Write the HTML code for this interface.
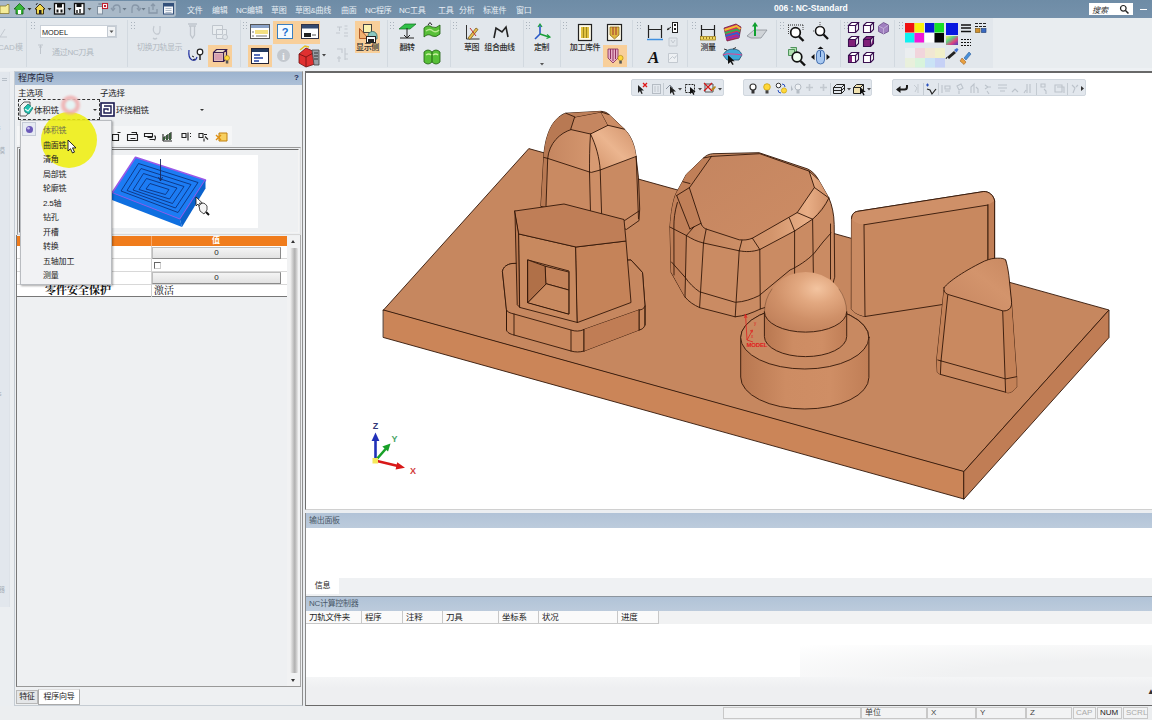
<!DOCTYPE html>
<html lang="zh">
<head>
<meta charset="utf-8">
<title>006 : NC-Standard</title>
<style>
*{box-sizing:border-box;margin:0;padding:0}
html,body{width:1152px;height:720px;overflow:hidden;background:#ebeef1;font-family:"Liberation Sans","Noto Sans CJK SC",sans-serif;font-size:8px;color:#222}
.abs{position:absolute}
#titlebar{position:absolute;left:0;top:0;width:1152px;height:18px;background:linear-gradient(#6e8ca6,#7591ab)}
#qat{position:absolute;left:0;top:1px;width:176px;height:16px;background:#a9b9c8;border-radius:0 0 3px 0}
#menu span{position:absolute;top:4px;color:#e8eff5;font-size:8px;white-space:nowrap;letter-spacing:-0.3px}
#title{position:absolute;left:774px;top:3px;color:#fff;font-weight:bold;font-size:8.5px;white-space:nowrap}
#search{position:absolute;left:1089px;top:3px;width:44px;height:12px;background:#fff}
#ribbon{position:absolute;left:0;top:18px;width:1152px;height:53px;background:#e9edf0}
#ribbon .grp{position:absolute;top:1px;height:49px;background:#e3e8ed;border-right:1px solid #d3dae1}
.hl{position:absolute;background:#f9cf97}
.rt{position:absolute;font-size:8px;color:#555;white-space:nowrap;letter-spacing:-0.3px}
#leftstrip{position:absolute;left:0;top:72px;width:10px;height:535px;background:#e2e7ed;border-right:1px solid #dde2e8}
#lpanel{position:absolute;left:14px;top:71px;width:289px;height:635px;background:#eef0f2;border:1px solid #c5ccd3;border-right-color:#8e8e8e}
#lptitle{position:absolute;left:0;top:0;width:287px;height:13px;background:linear-gradient(#9cb3ce,#adc0d7);font-size:9px;line-height:13px;padding-left:3px;color:#223}
#viewport{position:absolute;left:305px;top:71px;width:847px;height:439px;background:#fff;border-top:2px solid #686868;border-left:1px solid #6e6e6e;border-bottom:1px solid #d0d0d0}
.ptitle{position:absolute;height:12px;background:linear-gradient(#b1c3d7,#bccbdc);font-size:8px;line-height:12px;padding-left:3px;color:#4a5868;letter-spacing:-.3px}
#status{position:absolute;left:0;top:706px;width:1152px;height:14px;background:#eceef0}
.sb{position:absolute;top:707px;height:12px;border:1px solid #c8c8c8;background:#f2f3f4;font-size:8px;line-height:10px;padding-left:3px;color:#444}
.mi{position:absolute;left:23px;font-size:8px;color:#222;white-space:nowrap;letter-spacing:-0.2px}
</style>
</head>
<body>
<div id="titlebar">
  <div id="qat">
<svg class="abs" style="left:0;top:0" width="176" height="17" viewBox="0 1 176 17">
<path d="M0,6 h6 l1,-1.500 h2 v9 h-9z" fill="#f4ec98" stroke="#807020" stroke-width=".7"/>
<path d="M14,9 l5.500,-5.500 5.500,5.500 h-2 v5 h-7 v-5z" fill="#38b838" stroke="#106010" stroke-width=".8"/><rect x="18" y="10" width="3" height="4" fill="#fff"/>
<path d="M27.500,8 h4 l-2,2.500z" fill="#333"/>
<path d="M35,9 l5,-5 5,5 h-1.500 v5 h-7 v-5z" fill="#f0d850" stroke="#302000" stroke-width=".9"/><rect x="39" y="10" width="2.500" height="4" fill="#222"/><path d="M36,5 l1.500,-2" stroke="#222"/>
<path d="M47.500,8 h4 l-2,2.500z" fill="#333"/>
<rect x="54.500" y="3.500" width="10" height="10.500" fill="#fff" stroke="#111" stroke-width="1.300"/><rect x="57" y="4" width="5" height="3.500" fill="#111"/><rect x="56.500" y="9.500" width="2" height="3" fill="#111"/><rect x="60.500" y="9.500" width="2" height="3" fill="#111"/>
<path d="M67.500,8 h4 l-2,2.500z" fill="#333"/>
<rect x="74.500" y="3.500" width="9.500" height="10.500" fill="#fff" stroke="#111" stroke-width="1.300"/><rect x="76.500" y="4" width="5" height="3" fill="#111"/><path d="M77,10 v3 m3,-4 v4" stroke="#111" stroke-width="1.400"/>
<path d="M87.500,8 h4 l-2,2.500z" fill="#555"/>
<rect x="97.500" y="6.500" width="5" height="7.500" fill="#e8ecf0" stroke="#8090a0"/><path d="M100,5 v-2 m-2,1 h4" stroke="#8090a0"/><rect x="102.500" y="3.500" width="5" height="5" fill="#fff" stroke="#c02030" stroke-width="1.100"/><rect x="104" y="5" width="2" height="2" fill="#c02030"/>
<g stroke="#8797a8" fill="none" stroke-width="1.300"><path d="M113,9 q0,-4 4,-4 q3,0 3,4 v4"/><path d="M111,8 l2,2.500 2,-2.500"/><path d="M132,13 v-4 q0,-4 3,-4 q4,0 4,4"/><path d="M137,8 l2,2.500 2,-2.500"/><path d="M149,7 v6 h8 v-4 m-6,-3 l2,-2 2,2 m-2,-2 v6"/></g>
<path d="M122.500,8 h4 l-2,2.500z" fill="#6a7a8a"/><path d="M141.500,8 h4 l-2,2.500z" fill="#6a7a8a"/>
<rect x="163.500" y="3.500" width="10" height="10.500" fill="#f4f6fa" stroke="#33507a"/><rect x="164" y="4" width="9" height="2.500" fill="#33507a"/><path d="M165.500,8.500 h6 m-6,2 h6 m-6,2 h6" stroke="#9ab" stroke-width=".8"/>
</svg>

</div>
  <div id="menu">
    <span style="left:187px">文件</span><span style="left:212px">编辑</span><span style="left:236px">NC编辑</span><span style="left:271px">草图</span><span style="left:295px">草图&amp;曲线</span><span style="left:341px">曲面</span><span style="left:365px">NC程序</span><span style="left:399px">NC工具</span><span style="left:438px">工具</span><span style="left:459px">分析</span><span style="left:483px">标准件</span><span style="left:516px">窗口</span>
  </div>
  <div id="title">006 : NC-Standard</div>
  <div id="search"><span class="abs" style="left:3px;top:1px;font-size:8px;color:#333;font-style:italic">搜索</span><svg class="abs" style="left:30px;top:1px" width="11" height="11" viewBox="0 0 11 11"><circle cx="4.300" cy="4.300" r="2.800" fill="none" stroke="#222" stroke-width="1.200"/><path d="M6.500,6.500 l3,3" stroke="#222" stroke-width="1.500"/></svg></div>
  <div class="abs" style="left:1140px;top:9px;width:7px;height:1px;background:#fff"></div>
</div>
<div id="ribbon">
<svg class="abs" style="left:0;top:0" width="1152" height="53" viewBox="0 18 1152 53" font-family="Liberation Sans, Noto Sans CJK SC, sans-serif">
<rect x="0" y="18" width="993" height="51" fill="#e2e7ec"/>
<rect x="0" y="68" width="1152" height="3" fill="#eef1f4"/>
<!-- separators -->
<g stroke="#d2d9e0" stroke-width="1">
<path d="M26.500,20 v47 M127.500,20 v47 M240.500,20 v47 M387.500,20 v47 M450.500,20 v47 M523.500,20 v47 M560.500,20 v47 M632.500,20 v47 M687.500,20 v47 M776.500,20 v47 M840.500,20 v47 M894.500,20 v47"/>
</g>
<!-- grips -->
<g fill="#aab3bd">
<g id="grip"><rect x="0" y="0" width="1" height="1"/><rect x="3" y="0" width="1" height="1"/><rect x="0" y="3" width="1" height="1"/><rect x="3" y="3" width="1" height="1"/><rect x="0" y="6" width="1" height="1"/><rect x="3" y="6" width="1" height="1"/></g>
</g>
<g fill="#aab3bd">
<use href="#grip" x="31" y="22"/><use href="#grip" x="131" y="22"/><use href="#grip" x="243" y="22"/><use href="#grip" x="390" y="22"/><use href="#grip" x="453" y="22"/><use href="#grip" x="526" y="22"/><use href="#grip" x="563" y="22"/><use href="#grip" x="637" y="22"/><use href="#grip" x="692" y="22"/><use href="#grip" x="780" y="22"/><use href="#grip" x="844" y="22"/><use href="#grip" x="899" y="22"/>
</g>
<!-- group 1 partial -->
<path d="M0,37 l5,-8 m-5,8 h7" stroke="#c3c9d0" fill="none"/>
<text x="-2" y="50" font-size="8" fill="#b4bbc3">CAD模</text>
<!-- group 2 -->
<rect x="40.500" y="25.500" width="76" height="12" fill="#fff" stroke="#c9d0d8"/>
<rect x="107.500" y="26.500" width="8" height="10" fill="#f1f3f5" stroke="#c3cad2"/>
<path d="M109.500,30.500 h4 l-2,2.500z" fill="#555"/>
<text x="42" y="34.500" font-size="7.300" fill="#222">MODEL</text>
<path d="M38,45 h5 m-2.500,0 v9 m-1.500,-7 h3" stroke="#bfc5cc" fill="none"/>
<text x="52" y="55" font-size="8" fill="#b0b7bf" letter-spacing="-.3">通过NC刀具</text>
<!-- group 3 -->
<path d="M154,26 q-2,6 2,8 q4,1 4,-4 v-4 m-3,12 q-2,2 -4,0" stroke="#c3c9d0" fill="none" stroke-width="1.200"/>
<text x="137" y="50" font-size="8" fill="#b0b7bf" letter-spacing="-.5">切换刀轨显示</text>
<path d="M188,24 h9 m-8,2 h7 m-5.500,0 v9 l2,3 2,-3 v-9" stroke="#c0c6cd" fill="none" stroke-width="1.300"/>
<path d="M212.500,25.500 h10 v9 h-10z M216.500,29.500 h10 v9 h-10z" stroke="#c0c6cd" fill="#e9edf0"/><circle cx="225" cy="37" r="2.500" fill="#e2e7ec" stroke="#c0c6cd"/>
<path d="M189,50 q-1,8 3,10 q4,1 5,-3" stroke="#2030a0" fill="none" stroke-width="1.200"/><circle cx="200" cy="52" r="2.800" fill="#fff" stroke="#222" stroke-width="1.200"/><path d="M200,55 v5" stroke="#222" stroke-width="1.500"/><path d="M192,56 l2,1 m-1,3 l2,-1" stroke="#222"/>
<rect x="208" y="45" width="24" height="22" fill="#f8cf9a"/>
<path d="M213.500,52.500 h10 v9 h-10z M213.500,52.500 l3,-3 h10 l-3,3 M226.500,49.500 v9 l-3,3" fill="#e8d8c8" stroke="#3a2050" stroke-width="1.200"/><rect x="214.500" y="53.500" width="8" height="7" fill="#d8a0b0"/><circle cx="227" cy="58" r="2.500" fill="#ffd83a" stroke="#a08010" stroke-width=".6"/><rect x="225.800" y="60.500" width="2.500" height="3" fill="#555"/>
<!-- group 4 -->
<rect x="250.500" y="24.500" width="19" height="14" fill="#fff" stroke="#555"/><rect x="251" y="25" width="18" height="3" fill="#8aa2c8"/><rect x="255" y="30" width="13" height="4" fill="#f4e080"/><path d="M252,32 h2 m-2,4 h2 m2,0 h11" stroke="#777"/>
<rect x="273" y="21" width="47" height="23" fill="#f8cf9a"/>
<rect x="277.500" y="24.500" width="15" height="14" fill="#f4fbff" stroke="#3a7fc0"/><text x="285" y="36" font-size="11" font-weight="bold" fill="#1a6fd0" text-anchor="middle">?</text>
<rect x="301.500" y="24.500" width="17" height="14" fill="#fff" stroke="#334"/><rect x="302" y="25" width="16" height="3.500" fill="#334a70"/><rect x="304" y="33" width="7" height="4" fill="#222"/><path d="M312,35 h4" stroke="#555"/>
<rect x="248" y="45" width="24" height="22" fill="#f8cf9a"/>
<rect x="251.500" y="48.500" width="17" height="15" fill="#fff" stroke="#223"/><rect x="252" y="49" width="16" height="3" fill="#223a60"/><path d="M254,55 h6 m-6,3 h9 m-9,3 h5" stroke="#2040a0" stroke-width="1.300"/>
<circle cx="283.500" cy="55.500" r="6.500" fill="#c3c8ce"/><text x="283.500" y="59.500" font-size="10" font-weight="bold" fill="#f4f6f8" text-anchor="middle" font-family="Liberation Serif, serif">i</text>
<path d="M299,54 l7,-6 9,4 v12 l-9,3 -7,-4z" fill="#e03030" stroke="#701010" stroke-width=".8"/><path d="M299,54 l7,3 9,-5 m-9,5 v10" stroke="#701010" fill="none" stroke-width=".8"/><path d="M312,50 h7 v15 h-5z" fill="#9aa0a8" stroke="#444" stroke-width=".8"/><path d="M314,53 h4 m-4,3 h4 m-4,3 h4" stroke="#333"/><path d="M300,50 l5,-4 4,1" stroke="#e8c020" fill="none" stroke-width="1.500"/>
<path d="M322,54 h4 l-2,2.500z" fill="#444"/>
<g stroke="#c3c9d0" fill="none" stroke-width="1.100"><path d="M337,27 h5 m-2.500,0 v4 m5,-5 h3 m-3,3 h3 M336,33 h4 m4,0 h4 m-4,3 h4"/><path d="M337,49 h5 v4 m3,-5 v12 m-8,-2 h4 m-2,-2 v6 m6,-8 h3 m-3,5 h3"/></g>
<rect x="355" y="21" width="25" height="32" fill="#f8cf9a"/>
<rect x="363.500" y="24.500" width="8" height="8" fill="#fbf3b0" stroke="#444"/><path d="M359.500,28.500 l9,10 h-9z" fill="#f0b070" stroke="#a04010" stroke-width=".8"/><path d="M368,36 a4.500,4.500 0 0 1 9,0 v3 h-9z" fill="#8ac8c0" stroke="#306860" stroke-width=".8"/><rect x="366.500" y="36.500" width="9" height="6" fill="#fff" stroke="#222"/><rect x="368" y="39" width="6" height="3" fill="#222"/>
<text x="367.500" y="50" font-size="8" fill="#2e2e2e" font-weight="500" text-anchor="middle" letter-spacing="-.4">显示侧</text>
<!-- group 5 green -->
<path d="M399,29 l6,-5 h11 l-6,5z" fill="#30c048" stroke="#107020" stroke-width=".7"/><path d="M407,28 v10 m-3,-3 l3,3 3,-3 M400,38 h14" stroke="#222" fill="none"/>
<text x="407" y="50" font-size="8" fill="#2e2e2e" font-weight="500" text-anchor="middle" letter-spacing="-.4">翻转</text>
<path d="M424,28 q4,-4 8,-1 q4,2 8,-2 v9 q-4,4 -8,2 q-4,-3 -8,1z" fill="#58c038" stroke="#206010" stroke-width=".8"/><path d="M428,25 l2,-2.500 2,2.500" fill="none" stroke="#222"/><path d="M426,31 q4,-3 7,0 q3,2 6,-1" stroke="#b8e890" fill="none" stroke-width="1.500"/>
<path d="M424,52 q4,-4 8,0 q4,-4 8,0 v10 q-4,4 -8,0 q-4,4 -8,0z" fill="#58c038" stroke="#206010" stroke-width=".8"/><path d="M432,52 v10" stroke="#206010"/><path d="M426,55 q3,-2 5,0 m2,0 q3,-2 5,0" stroke="#c8f0a0" fill="none" stroke-width="1.500"/>
<!-- group 6 sketch -->
<path d="M466.500,25 v14 h13" stroke="#333" fill="none"/><path d="M468,38 l8,-10 2,1.500 -8,10z" fill="#e8c050" stroke="#705010" stroke-width=".7"/><path d="M470,28 l6,8" stroke="#c03030"/>
<text x="471.500" y="50" font-size="8" fill="#2e2e2e" font-weight="500" text-anchor="middle" letter-spacing="-.4">草图</text>
<path d="M494,38 l2,-10 6,4 4,-5 2,10" stroke="#222" fill="none" stroke-width="1.600"/>
<text x="499.500" y="50" font-size="8" fill="#2e2e2e" font-weight="500" text-anchor="middle" letter-spacing="-.4">组合曲线</text>
<!-- group 7 -->
<path d="M540,25 v9" stroke="#2858c8" stroke-width="1.600"/><path d="M540,34 l-5,5" stroke="#2858c8" stroke-width="1.600"/><path d="M540,34 l9,3" stroke="#18a038" stroke-width="1.600"/><path d="M538,27 l2,-3 2,3 M547,34.500 l3,2.500 -3.500,1.500" fill="none" stroke="#18a038" stroke-width="1.200"/>
<text x="541.500" y="50" font-size="8" fill="#2e2e2e" font-weight="500" text-anchor="middle" letter-spacing="-.4">定制</text>
<path d="M540,63 h4 l-2,2.500z" fill="#555"/>
<!-- group 8 -->
<rect x="578.500" y="24.500" width="13" height="16" fill="#fffbe8" stroke="#222" stroke-width="1.200"/><rect x="581" y="27" width="8" height="11" fill="#e0c040"/><path d="M583.500,27 v11 m3,-11 v11" stroke="#a08818"/>
<text x="585" y="50" font-size="8" fill="#2e2e2e" font-weight="500" text-anchor="middle" letter-spacing="-.4">加工库件</text>
<rect x="607.500" y="24.500" width="14" height="16" fill="#fffbe8" stroke="#222" stroke-width="1.200"/><path d="M610,27 h9 v8 l-4.500,4 -4.500,-4z" fill="#e0b840" stroke="#806010" stroke-width=".7"/><path d="M613,27 v8 m3,-8 v8" stroke="#a03030"/>
<rect x="603" y="45" width="24" height="22" fill="#f8cf9a"/>
<path d="M608,49 h10 v9 l-5,5 -5,-5z" fill="#e8b0c8" stroke="#802858" stroke-width=".8"/><path d="M610.500,49 v10 m2.500,-10 v12 m2.500,-12 v10" stroke="#903060"/><circle cx="620.500" cy="58" r="2.600" fill="#ffd83a" stroke="#a08010" stroke-width=".6"/><rect x="619.300" y="60.600" width="2.500" height="3" fill="#555"/>
<!-- group 9 dims -->
<path d="M648.500,25 v13 m13,-13 v13 M648.500,29.500 h13" stroke="#222" fill="none" stroke-width="1.200"/><path d="M647,39.500 h16" stroke="#4090e0" stroke-width="1.500"/>
<rect x="672.500" y="22.500" width="5" height="10" fill="#fff" stroke="#222"/><rect x="674" y="24" width="2" height="2" fill="#222"/><rect x="674" y="28" width="2" height="2" fill="#222"/><path d="M667,30 l4,-3" stroke="#222"/><path d="M667,30 l1,-2.500 1.500,2z" fill="#222"/>
<path d="M669,38 h8 v8 h-8z m2,2 l2,3 2,-3" stroke="#c3c9d0" fill="none"/>
<text x="648" y="62.500" font-size="17" font-weight="bold" font-style="italic" fill="#111" font-family="Liberation Serif, serif">A</text>
<path d="M668.500,53.500 h9 v9 h-9z m1,6 l3,-3 2,2 2,-3" stroke="#c3c9d0" fill="#eef1f4"/>
<!-- group 10 measure -->
<path d="M701.500,25 v11 m13,-11 v11 M701.500,29.500 h13" stroke="#222" fill="none" stroke-width="1.200"/><rect x="700.500" y="36.500" width="15" height="3.500" fill="#f0d860" stroke="#907010" stroke-width=".7"/><path d="M703.500,37 v2 m3,-2 v2 m3,-2 v2 m3,-2 v2" stroke="#705008" stroke-width=".7"/>
<text x="708" y="50" font-size="8" fill="#2e2e2e" font-weight="500" text-anchor="middle" letter-spacing="-.4">测量</text>
<path d="M724,28 l12,-4 5,3 -2,11 -12,3z" fill="#d03060" stroke="#601030" stroke-width=".7"/><path d="M724.500,30 l12,-4 4,3" stroke="#f0c030" stroke-width="2" fill="none"/><path d="M725,33 l12,-3.500 3,2" stroke="#30b050" stroke-width="2" fill="none"/><path d="M725.500,36 l11.500,-3 2.500,2" stroke="#3060d0" stroke-width="2" fill="none"/><path d="M726,39 l11,-3 2,1.500" stroke="#9030b0" stroke-width="2" fill="none"/>
<path d="M747,36 l7,-6 h13 l-6,8 h-10z" fill="#d0d4d8" stroke="#8a9098" stroke-width=".8"/><path d="M755,36 v-11" stroke="#10a030" stroke-width="2"/><path d="M752,26.500 l3,-4.500 3,4.500z" fill="#10a030"/>
<path d="M723,55 q3,-6 10,-6 q7,0 9,6 l-3,5 h-12z" fill="#40a8d8" stroke="#205070" stroke-width=".8"/><path d="M727,50 l-3,-1 m9,0 l3,-1.500" stroke="#333"/><path d="M728,55 v9 l2.500,-2 2,3 1.200,-.8 -2,-3 3,0z" fill="#111"/><path d="M723,55 q4,-2 9,-1 q5,0 10,1" stroke="#e84090" fill="none"/>
<!-- group 11 zoom -->
<path d="M788,25 h15" stroke="#222" stroke-dasharray="1 1"/><path d="M788.500,25 v10 m14.500,-10 v6" stroke="#444" stroke-dasharray="1 1"/><circle cx="795.500" cy="32.500" r="4.800" fill="#fff" stroke="#111" stroke-width="1.700"/><path d="M799,36.500 l4.500,4.500" stroke="#111" stroke-width="2.400"/>
<circle cx="820" cy="31" r="4.500" fill="#fff" stroke="#111" stroke-width="1.600"/><path d="M823.500,34.500 l4.500,4.500" stroke="#111" stroke-width="2.300"/><path d="M820,22 v5 m-6,4 h-2" stroke="#555" stroke-dasharray="1 1"/>
<path d="M788.500,49.500 h6 v6 h-6z m2,-2 h6 v6" fill="#b0e0b0" stroke="#308040" stroke-width=".8"/><circle cx="797" cy="57" r="4.800" fill="#f0fff0" stroke="#111" stroke-width="1.700"/><path d="M800.500,61 l4.500,4.500" stroke="#111" stroke-width="2.400"/>
<rect x="816.500" y="50" width="8" height="14" rx="4" fill="#a8c8f0" stroke="#2858a0" stroke-width=".8"/><path d="M820.500,51 v6" stroke="#2858a0"/><path d="M811,57 l3.500,-3 v6z M830,57 l-3.500,-3 v6z M820.500,46.500 l-3,2.500 h6z" fill="#111"/>
<!-- group 12 cubes -->
<g id="cubeo"><path d="M848.500,25.500 h7 v7 h-7z M848.500,25.500 l3,-3 h7 l-3,3 M858.500,22.500 v7 l-3,3" fill="#fff" stroke="#3a1050" stroke-width="1.100"/></g>
<use href="#cubeo" x="15" y="0"/>
<path d="M878.500,26 l5,-3.500 5,2.500 v6.500 l-5,2.500 -5,-2.500z" fill="#a080c0" stroke="#604080" stroke-width=".7"/><path d="M878.500,26 l5,2.500 5,-3.500 m-5,3.500 v6" stroke="#d0c0e0" fill="none" stroke-width=".7"/>
<path d="M848.500,39.500 h7 v7 h-7z M848.500,39.500 l3,-3 h7 l-3,3 M858.500,36.500 v7 l-3,3" fill="#fff" stroke="#3a1050" stroke-width="1.100"/><rect x="849" y="40" width="6" height="6" fill="#802078"/>
<path d="M863.500,39.500 h7 v7 h-7z M863.500,39.500 l3,-3 h7 l-3,3 M873.500,36.500 v7 l-3,3" fill="#802078" stroke="#3a1050" stroke-width="1.100"/>
<use href="#cubeo" x="0" y="30"/><path d="M849,56 h3 v6 h-3z" fill="#802078"/>
<use href="#cubeo" x="15" y="30"/>
<!-- colors -->
<rect x="905" y="23" width="9.500" height="9.500" fill="#f01010"/><rect x="914.500" y="23" width="9.500" height="9.500" fill="#f8f010"/><rect x="925" y="23" width="9.500" height="9.500" fill="#0818d8"/><rect x="934.500" y="23" width="9.500" height="9.500" fill="#18e028"/>
<rect x="946" y="23" width="12" height="12" fill="#0818e0"/>
<rect x="905" y="33" width="9.500" height="9.500" fill="#10f0f0"/><rect x="914.500" y="33" width="9.500" height="9.500" fill="#f018d8"/><rect x="925" y="33" width="9.500" height="9.500" fill="#fff"/><rect x="934.500" y="33" width="9.500" height="9.500" fill="#080808"/>
<rect x="946" y="36" width="12" height="9" fill="url(#rg1)"/>
<path d="M961,25 h10 m-10,3 h10 m-10,3.500 h10" stroke="#111" stroke-width="1.500"/>
<path d="M975,23.500 h11 m-11,3 h11" stroke="#222" stroke-dasharray="3 1"/><rect x="975.500" y="28.500" width="4.500" height="4" fill="#d09030" stroke="#705010" stroke-width=".6"/><rect x="981.500" y="28.500" width="4.500" height="4" fill="#3868c0" stroke="#183870" stroke-width=".6"/>
<path d="M961,39.500 h10 m-10,3 h10 m-10,3 h10" stroke="#111" stroke-dasharray="2 1" stroke-width="1.200"/>
<g opacity=".55"><rect x="905" y="48" width="10" height="10" fill="#f4f4f4"/><rect x="915" y="48" width="10" height="10" fill="#ffc8d0"/><rect x="925" y="48" width="10" height="10" fill="#ffe8c0"/><rect x="935" y="48" width="10" height="10" fill="#fff8b0"/>
<rect x="905" y="58" width="10" height="9.500" fill="#f0f8d0"/><rect x="915" y="58" width="10" height="9.500" fill="#d0ffd0"/><rect x="925" y="58" width="10" height="9.500" fill="#b8e0ff"/><rect x="935" y="58" width="10" height="9.500" fill="#b0c0ff"/></g>
<path d="M947,57 l7,-6 2,2 -7,6z" fill="#222"/><path d="M954,50 l3,-2 1.500,1.500 -2,3z" fill="#4070d0"/><path d="M947,57 l-1,2" stroke="#222"/>
<path d="M969,52 l2,2 -5,6 -2,-2z" fill="#4890d8" stroke="#205090" stroke-width=".5"/><path d="M962,58 l4,4 -2,2.500 -4,-3.500z" fill="#e8a040" stroke="#905010" stroke-width=".5"/>
<defs><linearGradient id="rg1" x1="0" y1="0" x2="1" y2="1"><stop offset="0" stop-color="#f0f060"/><stop offset=".35" stop-color="#60d080"/><stop offset=".65" stop-color="#e04080"/><stop offset="1" stop-color="#4040c0"/></linearGradient></defs>
</svg>

</div>
<div id="status"></div>
<div id="leftstrip"><span class="abs" style="left:2px;top:6px;width:5px;height:1px;background:#b8c0c9;box-shadow:0 2px 0 #b8c0c9"></span><span class="abs" style="left:-3px;top:52px;font-size:7px;color:#a9b1ba">s</span><span class="abs" style="left:-2px;top:73px;font-size:7px;color:#a9b1ba">模</span><span class="abs" style="left:-2px;top:318px;font-size:7px;color:#a9b1ba">s</span><span class="abs" style="left:-2px;top:512px;font-size:7px;color:#a9b1ba">器</span></div>
<div id="lpanel"><div id="lptitle">程序向导</div></div>
<style>
.pl{position:absolute;font-size:8.5px;color:#222;white-space:nowrap;letter-spacing:-.3px;line-height:10px}
.gbtn{position:absolute;left:152px;width:129px;height:12px;background:linear-gradient(#f4f4f4,#e2e2e2);border:1px solid #bdbdbd;border-right-color:#8a8a8a;border-bottom-color:#8a8a8a;font-size:8px;line-height:10px;text-align:center;color:#222}
</style>
<div class="abs" style="left:294px;top:73px;font-size:8px;font-weight:bold;color:#1c2c55">?</div>
<div class="pl" style="left:18px;top:88px">主选项</div>
<div class="pl" style="left:100px;top:88px">子选择</div>
<!-- main combo -->
<div class="abs" style="left:18px;top:99px;width:82px;height:21px;border:1px dashed #333"></div>
<svg class="abs" style="left:18px;top:100px" width="16" height="19" viewBox="18 100 16 19"><path d="M20,106 l4,-4 h6 v9 l-4,5 h-6z" fill="#f4f4f4" stroke="#333" stroke-width=".8"/><path d="M24,108 l4,-4 5,4 -4,6 -4,-2z" fill="#20c0b0" stroke="#106860" stroke-width=".7"/><path d="M25,109 l3,2 4,-5" stroke="#e8fff8" fill="none" stroke-width="1.200"/></svg>
<div class="pl" style="left:34px;top:105px">体积铣</div>
<div class="abs" style="left:93px;top:109px;width:0;height:0;border-left:2px solid transparent;border-right:2px solid transparent;border-top:2.500px solid #333"></div>
<!-- sub combo -->
<svg class="abs" style="left:100px;top:102px" width="15" height="15" viewBox="0 0 15 15"><rect x="1" y="1" width="13" height="13" fill="#fff" stroke="#1a1a50" stroke-width="1.600"/><path d="M4,4 h7 v7 h-7 v-4 h4 v1.500" fill="none" stroke="#1a1a50" stroke-width="1.400"/></svg>
<div class="pl" style="left:116px;top:105px">环绕粗铣</div>
<div class="abs" style="left:200px;top:109px;width:0;height:0;border-left:2px solid transparent;border-right:2px solid transparent;border-top:2.500px solid #333"></div>
<!-- icon row -->
<div class="abs" style="left:17px;top:126px;width:215px;height:19px;background:#f5f6f7"></div>
<svg class="abs" style="left:108px;top:130px" width="124" height="14" viewBox="108 130 124 14">
<g stroke="#222" fill="none" stroke-width="1.100">
<path d="M112.500,134.500 h6 v6 h-6z m5,-2 h3"/>
<path d="M127.500,134.500 h10 v6 h-10z m4,-2 h5 v2 m-6,4 h5"/>
<path d="M144.500,133.500 h8 v3 h-8z m3,4 h5 m-3,2 h5 m0,-4 q2,2 0,5"/>
<path d="M163,141 v-7 m0,7 h9 m-7,-2 v-3 m3,3 v-5 m3,5 v-7"/>
<path d="M182,133.500 h4 v4 h-4z m6,-1 v8 m2,-7 h1 m-1,3 h1"/>
<path d="M199,133.500 h4 v4 h-4z m5,1 h3 m-2,2 l3,3 m-4,-1 v3"/>
</g>
<path d="M163,137 h2 v3 h-2z M166,135 h2 v5 h-2z M169,133 h2 v7 h-2z" fill="#3a5a3a"/>
<path d="M219,133 h8 v8 h-8z" fill="#f8d060" stroke="#c08010"/><path d="M216,135 l5,5 m0,-5 l-5,5" stroke="#e09010" stroke-width="1.400"/>
</svg>
<!-- picture frame -->
<div class="abs" style="left:17px;top:147px;width:284px;height:88px;border:1px solid #9a9a9a;border-right-color:#d8d8d8;border-bottom-color:#d8d8d8;background:#eef0f2"></div>
<div class="abs" style="left:19px;top:149px;width:280px;height:84px;border:1px solid #6e6e6e;border-right-color:#f4f4f4;border-bottom-color:#f4f4f4"></div>
<div class="abs" style="left:105px;top:155px;width:153px;height:73px;background:#fff"></div>
<svg class="abs" style="left:100px;top:150px" width="160" height="82" viewBox="100 150 160 82">
<polygon points="112,193 135.500,157.300 205.500,180 180,219.500" fill="#1c7cf4" stroke="#9a58e8" stroke-width="1.600" stroke-linejoin="round"/>
<polygon points="112,193 180,219.500 182,227 112,200" fill="#0f6fe0"/>
<polygon points="180,219.500 205.500,180 205.500,188.500 182,227" fill="#0a62cc"/>
<g fill="none" stroke="#0a2a70" stroke-width=".8">
<polygon points="121,191 138.500,163.500 198,182.500 178,212.500"/>
<polygon points="127,190.500 141,168.500 191,184.500 175.500,208"/>
<polygon points="133,190 143.500,173.500 184,186.500 172.500,203.500"/>
<polygon points="139,189.500 146.500,178.500 177,188 169.500,199"/>
<polygon points="146,189 150,183.500 169,189.500 165.500,194.500"/>
</g>
<path d="M160.500,159 v22 m-2,-4 l2,4 2,-4" stroke="#1a2a60" fill="none" stroke-width=".9"/>
<path d="M196,197 l0,9 2,-2 2,4 1.500,-.8 -2,-4 3,0z" fill="#fff" stroke="#111" stroke-width=".8"/>
<path d="M199,206 q4,-6 8,0 v4 l-3,4 -4,-3z" fill="#f4f4f4" stroke="#222" stroke-width=".8"/><path d="M206,212 l3,3" stroke="#111" stroke-width="2"/>
</svg>
<!-- table -->
<div class="abs" style="left:17px;top:236px;width:270px;height:10px;background:#f07c1c"></div>
<div class="abs" style="left:151px;top:236px;width:1px;height:10px;background:#f8a868"></div>
<div class="abs" style="left:212px;top:236px;font-size:8px;line-height:10px;color:#fff;font-weight:bold">值</div>
<div class="abs" style="left:17px;top:246px;width:270px;height:51px;background:#fff;border-bottom:1px solid #777"></div>
<div class="abs" style="left:17px;top:258px;width:270px;height:1px;background:#d8d8d8"></div>
<div class="abs" style="left:17px;top:271px;width:270px;height:1px;background:#d8d8d8"></div>
<div class="abs" style="left:17px;top:284px;width:270px;height:1px;background:#d8d8d8"></div>
<div class="abs" style="left:151px;top:246px;width:1px;height:51px;background:#d0d0d0"></div>
<div class="gbtn" style="top:247px">0</div>
<div class="abs" style="left:154px;top:262px;width:7px;height:7px;background:#fff;border:1px solid #666;border-right-color:#ccc;border-bottom-color:#ccc"></div>
<div class="gbtn" style="top:272px">0</div>
<div class="abs" style="left:45px;top:284px;font-family:'Liberation Serif','Noto Serif CJK SC',serif;font-weight:bold;font-size:11px;line-height:13px;color:#111;letter-spacing:0px;white-space:nowrap">零件安全保护</div>
<div class="abs" style="left:154px;top:284px;font-family:'Liberation Serif','Noto Serif CJK SC',serif;font-size:10px;line-height:13px;color:#111;white-space:nowrap">激活</div>
<!-- scrollbar -->
<div class="abs" style="left:287px;top:236px;width:13px;height:451px;background:#f1f2f3"></div>
<div class="abs" style="left:290px;top:248px;width:8px;height:425px;background:linear-gradient(90deg,#f4f4f4,#c4c4c4 40%,#b0b0b0 60%,#e8e8e8);border-radius:1px"></div>
<div class="abs" style="left:291px;top:240px;width:0;height:0;border-left:2.500px solid transparent;border-right:2.500px solid transparent;border-bottom:3px solid #333"></div>
<div class="abs" style="left:291px;top:679px;width:0;height:0;border-left:2.500px solid transparent;border-right:2.500px solid transparent;border-top:3px solid #333"></div>
<!-- inner frame -->
<div class="abs" style="left:16px;top:235px;width:285px;height:452px;border-left:1px solid #777;border-bottom:1px solid #999;border-right:1px solid #aaa;pointer-events:none"></div>
<!-- tabs -->
<div class="abs" style="left:16px;top:690px;width:22px;height:14px;background:#e4e6e8;border:1px solid #b8b8b8;font-size:8px;line-height:12px;text-align:center;color:#222;letter-spacing:-.3px">特征</div>
<div class="abs" style="left:38px;top:689px;width:42px;height:16px;background:#fff;border:1px solid #aaa;border-top-color:#ddd;font-size:8px;line-height:14px;text-align:center;color:#222;letter-spacing:-.3px">程序向导</div>

<div id="viewport"></div>
<svg id="model" class="abs" style="left:0;top:0" width="1152" height="720" viewBox="0 0 1152 720">
<defs>
<linearGradient id="gT1" x1="0" y1="0" x2="1" y2="0"><stop offset="0" stop-color="#b97a55"/><stop offset=".45" stop-color="#cf9068"/><stop offset=".8" stop-color="#e3a57c"/><stop offset="1" stop-color="#c98a62"/></linearGradient>
<radialGradient id="gSph" cx="0.64" cy="0.28" r="0.8"><stop offset="0" stop-color="#f3c4a0"/><stop offset=".3" stop-color="#e2a880"/><stop offset=".65" stop-color="#cf9068"/><stop offset="1" stop-color="#c0805a"/></radialGradient>
<linearGradient id="gCyl" x1="0" y1="0" x2="1" y2="0"><stop offset="0" stop-color="#b87750"/><stop offset=".35" stop-color="#cd8c63"/><stop offset=".7" stop-color="#cf8e65"/><stop offset="1" stop-color="#c07e56"/></linearGradient>
<linearGradient id="gOct" x1="0" y1="0" x2="1" y2="1"><stop offset="0" stop-color="#c48560"/><stop offset="1" stop-color="#cd8c64"/></linearGradient>
<linearGradient id="gFil" x1="0" y1="0" x2="1" y2="0"><stop offset="0" stop-color="#c2835c"/><stop offset=".6" stop-color="#d3956c"/><stop offset=".85" stop-color="#e8ae86"/><stop offset="1" stop-color="#d09068"/></linearGradient>
<linearGradient id="gWed" x1="0" y1="1" x2="1" y2="0"><stop offset="0" stop-color="#c68660"/><stop offset=".6" stop-color="#d3946c"/><stop offset="1" stop-color="#c98961"/></linearGradient>
<linearGradient id="gT1a" x1="0" y1="0" x2="1" y2="0"><stop offset="0" stop-color="#c58660"/><stop offset="1" stop-color="#d4966e"/></linearGradient>
<linearGradient id="gT1b" x1="0" y1="1" x2="1" y2="0"><stop offset="0" stop-color="#d29269"/><stop offset=".5" stop-color="#ebb58f"/><stop offset="1" stop-color="#d0916a"/></linearGradient>
</defs>
<g stroke="#321608" stroke-width="0.9" stroke-linejoin="round" stroke-linecap="round" fill="#c6875f">
<!-- plate -->
<polygon points="383.5,310 528.8,148.6 1109,310 964,471.5" fill="#c6875f"/>
<polygon points="383.5,310 964,471.5 964,499 383.5,337.5" fill="#cb8558"/>
<polygon points="964,471.5 1109,310 1109,337.5 964,499" fill="#c07d55"/>
</g>

<!-- tower1 (rounded top box) -->
<g stroke="#321608" stroke-width="0.9" stroke-linejoin="round" stroke-linecap="round" fill="none">
<path d="M540.9,206 L543.8,156.4 C544.5,142 549,125 558.4,117.5 C562,114.5 564,113.5 566,113.2 L601,111.3 C605,111.6 607,112.8 609,114.6 L624.5,129.2 C630,135 634.5,143 636,156.4 L638.5,177.8 L639.7,209 L639,220.6 L626.5,229.4 L601.6,222 L590.5,219 Z" fill="#c98a62"/>
<!-- left dark fillet -->
<path d="M540.9,206 L543.8,156.4 C544.5,142 549,125 558.4,117.5 L566,113.2 L575,117 L571,129.6 C560,133 549,143 547.7,158.4 L546,206 Z" fill="#b87953" stroke="none"/>
<!-- front-left fillet -->
<path d="M571,129.600 L590.500,134 C589.500,148 589.500,160 589.500,172 L547.700,158.400 C549,143 560,133 571,129.600 Z" fill="url(#gT1a)" stroke="none"/>
<!-- corner fillet strip -->
<path d="M590.500,134 C596,145 599.500,158 600.200,170 L591.400,172.400 L589.500,172 C589.500,160 589.500,148 590.500,134 Z" fill="#d89a72" stroke="none"/>
<!-- right fillet highlight -->
<path d="M590.500,134 L608,125.300 L624.500,129.200 C630,135 634.500,143 636.200,156.400 L600.200,170 C599.500,158 596,145 590.500,134 Z" fill="url(#gT1b)" stroke="none"/>
<!-- narrow vertical strip -->
<polygon points="589.500,172 591.400,172.400 600.200,170 601.600,222 590.500,219" fill="#cd8e66" stroke="none"/>
<!-- top small face -->
<polygon points="575,117 601,112 608,125.3 590.5,134 571,129.6" fill="#c58660"/>
<polygon points="566,113.200 601,111.300 601,112 575,117" fill="#bd7f59" stroke="none"/>
<polygon points="601,112 609,114.600 624.500,129.200 608,125.300" fill="#cc8d65" stroke="none"/>
<line x1="566" y1="113.2" x2="575" y2="117"/>
<line x1="608" y1="125.3" x2="624.5" y2="129.2"/>
<line x1="601" y1="112" x2="609" y2="114.6"/>
<path d="M571,129.6 C560,133 549,143 547.7,158.4"/>
<polyline points="543.8,157.4 547.7,158.4 589.5,172 591.4,172.4 600.2,170 636.2,156.4"/>
<path d="M590.5,134 C589.5,148 589.5,160 589.5,172"/>
<path d="M590.5,134 C596,145 599.5,158 600.2,170"/>
<line x1="547.7" y1="158.4" x2="546" y2="206"/>
<line x1="589.5" y1="172" x2="590.5" y2="212"/>
<line x1="600.2" y1="170" x2="601.6" y2="214"/>
<line x1="636.2" y1="156.4" x2="638.5" y2="218.7"/>
<polyline points="624.5,220.6 639,211"/>
</g>
<!-- hex base -->
<g stroke="#321608" stroke-width="0.9" stroke-linejoin="round" stroke-linecap="round" fill="none">
<path d="M502.5,271 C503.5,266.5 507,264.5 512,263.5 L631,260 L642.5,272.5 L645,306 L645,325 C644,328 642,329.5 639,330 L584,351 C580,352.3 575,352.3 571,351 L514,335 C510,334 507,332.5 506.5,330 L506.5,310 Z" fill="#c8875d"/>
<!-- top face of base -->
<path d="M502.5,271 C503.5,266.5 507,264.5 512,263.5 L631,260 L642.5,272.5 L645,306 C644,308.5 642,309.8 639,310 L584,329.5 C580,331.5 575,331.5 571,330 L514,314 C510,313 507,312 506.5,310 Z" fill="#c6875f"/>
<line x1="506.5" y1="310" x2="506.5" y2="330"/>
<line x1="514" y1="314" x2="514" y2="335"/>
<line x1="571" y1="330.3" x2="571" y2="351"/>
<line x1="584" y1="329.5" x2="584" y2="351"/>
<line x1="639" y1="310" x2="639" y2="330"/>
<line x1="645" y1="306" x2="645" y2="325"/>
<polygon points="584,329.5 639,310 639,330 584,351" fill="#c07d55" stroke="none"/>
<line x1="584" y1="329.5" x2="584" y2="351"/><line x1="639" y1="310" x2="639" y2="330"/>
</g>
<!-- hex tower -->
<g stroke="#321608" stroke-width="0.9" stroke-linejoin="round" stroke-linecap="round" fill="none">
<polygon points="515,211 519,234 520,307.5 517.5,305" fill="#b97850"/>
<polygon points="519,234 576,247 577.5,322.5 520,307.5" fill="#c8895f"/>
<polygon points="576,247 626,241 631,302.5 577.5,322.5" fill="#c58359"/>
<polygon points="515,211 564,204 624,219.5 626,241 576,247 519,234" fill="#bf7e57"/>
<!-- pocket -->
<polygon points="528,260 569,271 569,314 528,302.5" fill="#c8895f"/>
<polygon points="528,260 545.5,266.3 546.3,283.8 528,302.5" fill="#b07048"/>
<polygon points="545.5,266.3 568.8,272 568.8,290 546.3,283.8" fill="#c4835a"/>
<polygon points="528,302.5 546.3,283.8 568.8,290 568.8,313.8" fill="#c98a60"/>
</g>

<!-- octagon dome -->
<g stroke="#321608" stroke-width="0.9" stroke-linejoin="round" stroke-linecap="round" fill="none">
<path d="M671.1,272 L670,227 C671,212 673,200 676.4,192.8 L686.4,174.3 L703.5,158 C706,155.5 709,154 712.8,153.7 L759,152.7 L807.8,169 C812,171 816,175 818.4,179.6 L828.9,198 C832,205 834,214 834.2,224.5 L834.7,277.2 L833,283 L813,290 L794.6,298 L760.3,309 C752,313 744,316 735.2,316.8 L699.6,307.6 C694,305 689,302 685,297 Z" fill="#ca8b63"/>
<!-- left dark faces -->
<path d="M671.1,272 L670,227 C671,212 673,200 676.4,192.8 L686.4,174.3 L703.5,158 L711.5,156.4 L689.6,187.5 L701,223.3 L689.9,228.9 L686.4,235.5 L685,297 Z" fill="#c07f58" stroke="none"/>
<!-- fillet band front with highlight -->
<path d="M701,223.3 L705.8,228.9 L739.2,239.8 L752.4,238.2 L797.2,212.6 L814.4,187.5 L809.1,171.1 L818.4,179.6 L828.9,198 L812.6,219.2 L794.6,231 L759.8,249.5 C752,252 746,252 739.2,250.8 L703.5,243 C696,241 690,238 686.4,235.5 L689.9,228.9 Z" fill="url(#gFil)" stroke="none"/>
<!-- top face -->
<path d="M689.6,187.5 L711.5,156.4 L759.8,153.7 L809.1,171.1 L814.4,187.5 L797.2,212.6 L752.4,238.2 C748,240 744,240.3 739.2,239.8 L705.8,228.9 C703,227.5 701.8,226 701,223.3 Z" fill="url(#gOct)"/>
<!-- fillet lower boundary -->
<path d="M670,227.1 L686.4,235.5 C692,239 697,241.5 703.5,243 L739.2,250.8 C746,252 752,252 759.8,249.5 L794.6,231 L812.6,219.2 C820,213 825,206 828.9,198"/>
<!-- connectors -->
<line x1="694.3" y1="226.5" x2="686.4" y2="235.5"/>
<line x1="706.2" y1="229" x2="703.5" y2="243"/>
<line x1="742" y1="240" x2="739.2" y2="250.8"/>
<line x1="752.4" y1="238.2" x2="759.8" y2="249.5"/>
<line x1="789.3" y1="217.9" x2="794.6" y2="231"/>
<line x1="797.2" y1="212.6" x2="812.6" y2="219.2"/>
<line x1="814.4" y1="187.5" x2="828.9" y2="198"/>
<line x1="809.1" y1="171.1" x2="818.4" y2="179.6"/>
<line x1="711.5" y1="156.4" x2="703.5" y2="158"/>
<!-- left -->
<line x1="683" y1="181.7" x2="689.9" y2="183.5"/>
<line x1="676.7" y1="195.5" x2="689.6" y2="187.5"/>
<line x1="676.7" y1="195.5" x2="689.9" y2="228.9"/>
<line x1="689.9" y1="228.9" x2="701" y2="223.3"/>
<path d="M677.4,202.5 C674.5,212 673.9,220 673.9,226 L674,275"/>
<!-- vertical lines -->
<line x1="686.4" y1="235.5" x2="685" y2="297"/>
<line x1="703.5" y1="243" x2="699.6" y2="307.6"/>
<line x1="739.2" y1="250.8" x2="735.2" y2="316.8"/>
<line x1="759.8" y1="249.5" x2="760.3" y2="309"/>
<line x1="794.6" y1="231" x2="794.6" y2="298"/>
<line x1="812.6" y1="219.2" x2="813.6" y2="290"/>
<line x1="830.5" y1="224" x2="830.5" y2="279"/>
<!-- bottom band line -->
<path d="M671.5,262 L685,277.2 C689,283 694,288 699.6,291.8 L735.2,302.3 C744,302 752,299 759,295.7 L790,270 C797,267 808,260 814.4,253 L823,242 L831,233"/>
</g>

<!-- wall -->
<g stroke="#321608" stroke-width="0.9" stroke-linejoin="round" stroke-linecap="round" fill="none">
<path d="M851.5,218.5 C852,214 854,212 857.7,211.3 L983.8,191.5 C989,191.5 993.5,195 994.6,200.8 L994.6,262 L988,262 L942,304.6 L865,316.5 C858,315 853,312 851.5,309 Z" fill="#c8885f"/>
<path d="M851.5,218.5 C852,214 854,212 857.7,211.3 L983.8,191.5 C989,191.5 993.5,195 994.6,200.8 C993,203.5 991,204.8 988,205 L864,224.8 C858,224.5 853,222 851.5,218.5 Z" fill="#cf9068" stroke="none"/><path d="M851.5,218.5 C852,214 854,212 857.7,211.3 L983.8,191.5 C989,191.5 993.5,195 994.6,200.8 M988,205 L864,224.8"/>
<path d="M851.5,218.5 C853,222 858,224.5 864,224.8 L865,316.5 C858,315 853,312 851.5,309 Z" fill="#c98a62" stroke="none"/>
<line x1="864" y1="224.8" x2="865" y2="316.5"/>
<line x1="988" y1="205" x2="988" y2="262"/>
<polygon points="988,205 994.6,200.8 994.6,262 988,262" fill="#c07e56" stroke="none"/>
<line x1="988" y1="205" x2="988" y2="262"/><line x1="994.6" y1="200.8" x2="994.6" y2="262"/>
</g>
<!-- big cylinder + small cylinder + hemisphere -->
<g stroke="#321608" stroke-width="0.9" stroke-linejoin="round" stroke-linecap="round" fill="none">
<path d="M740.7,337.5 A64.1,31.5 0 0 1 868.9,337.5 L868.9,377.5 A64.1,31.5 0 0 1 740.7,377.5 Z" fill="url(#gCyl)"/>
<ellipse cx="804.8" cy="337.5" rx="64.1" ry="31.5" fill="#c88961"/>
<path d="M764.4,312 L764.4,336.5 A41.1,20.1 0 0 0 846.7,336.5 L846.7,312 Z" fill="url(#gCyl)"/>
<path d="M764.4,312 A41.1,40 0 0 1 846.7,312 A41.1,20.1 0 0 1 764.4,312 Z" fill="url(#gSph)" stroke="none"/><path d="M764.4,312 A41.1,20.1 0 0 0 846.7,312"/><path d="M764.4,312 A41.1,40 0 0 1 772,289" stroke-opacity=".35"/><path d="M846.7,312 A41.1,40 0 0 0 839,289" stroke-opacity=".35"/>
</g>
<!-- UCS model label -->
<g stroke="#e02020" stroke-width="0.8" fill="none">
<polyline points="745.500,314 747,340"/><polyline points="747,340 752,331"/><polyline points="747,340 753,342"/><path d="M744.500,318 l1,-4 1.500,4 M750,331 l2.500,-1 -.5,2.500"/>
</g>
<text x="754" y="325" font-size="4.500" fill="#e02020" font-family="Liberation Sans, sans-serif">y</text><text x="751" y="338" font-size="4.500" fill="#e02020" font-family="Liberation Sans, sans-serif">x</text>
<text x="746.500" y="347" font-size="6" font-weight="bold" fill="#e02020" font-family="Liberation Sans, sans-serif" letter-spacing="-.2">MODEL</text>
<!-- wedge -->
<g stroke="#321608" stroke-width="0.9" stroke-linejoin="round" stroke-linecap="round" fill="none">
<path d="M944,290 L936.7,360 L937.3,372.2 L940.4,374.4 L1005.6,392.2 C1009,393.8 1013,392 1016.7,386.7 L1016.7,377.8 L1011.6,304.4 L1005.6,260 Z" fill="#c98960"/>
<path d="M1002.7,311 L1011.6,304.4 L1016.7,377.8 L1016.7,386.7 C1013,392 1009,393.8 1005.6,392.2 Z" fill="#c38157" stroke="none"/>
<path d="M944,290 L947.8,295 L941,361 L940.4,374.4 L937.3,372.2 L936.7,360 Z" fill="#c48258" stroke="none"/>
<line x1="947.8" y1="295" x2="941" y2="361"/><line x1="941" y1="361" x2="940.4" y2="374.4"/>
<line x1="1002.7" y1="311" x2="1005.6" y2="392.2"/>
<polyline points="937.8,360 1005.6,378.9 1016.7,376.7"/>
<path d="M944,287.8 C946,284 960,273 984.4,261.1 C990,258.8 994,258 997.8,258.2 C1002,258 1004.5,258.8 1005.6,260 C1007,264 1008,269 1008.9,275.6 L1011.6,302.2 C1011.8,306 1010.5,309 1007.8,310 C1006,311 1004,311 1002.2,310.7 L947.8,294.4 C945,293.5 943.5,291 944,287.8 Z" fill="url(#gWed)"/>
</g>

<!-- view triad -->
<g stroke-linecap="butt">
<line x1="375.5" y1="460" x2="375.5" y2="439" stroke="#2030b8" stroke-width="2.6"/>
<polygon points="375.5,432.5 371.6,441 379.4,441" fill="#2030b8"/>
<line x1="376" y1="460" x2="386.5" y2="448" stroke="#18a028" stroke-width="2.6"/>
<polygon points="390.5,443.5 382.3,446.5 388,451.6" fill="#18a028"/>
<line x1="377" y1="461" x2="398" y2="466" stroke="#d81818" stroke-width="2.6"/>
<polygon points="405,467.8 397.2,462.2 395.6,469.6" fill="#d81818"/>
<rect x="372.5" y="458" width="5.5" height="5.5" fill="#f4e85a"/>
</g>
<g font-family="Liberation Sans, sans-serif" font-weight="bold" font-size="9" text-anchor="middle">
<text x="375.6" y="428.6" fill="#343878">Z</text>
<text x="394.5" y="442" fill="#48a468">Y</text>
<text x="413" y="473.5" fill="#d23a3a">X</text>
</g>
</svg>

<style>
.vtb{position:absolute;top:79px;height:17px;background:#e2e7ed;border:1px solid #d0d7de;border-radius:2px}
.vtb svg{position:absolute;left:0;top:0}
</style>
<div class="vtb" style="left:631px;width:93px"><svg width="93" height="17" viewBox="631 79 93 17">
<path d="M637,84 l0,8 2,-2 1.5,3 1.2,-.6 -1.4,-2.8 2.7,0z" fill="#222"/><path d="M642,82 l4,4 m0,-4 l-4,4" stroke="#e01818" stroke-width="1.3"/>
<rect x="651.5" y="83.5" width="8" height="9" fill="none" stroke="#b5bcc4"/><path d="M654,85 v6 m3,-6 v6" stroke="#c0c6cd"/>
<line x1="662.5" y1="82" x2="662.5" y2="94" stroke="#c4cbd2"/>
<path d="M665,88 l4,-4 3,3" fill="none" stroke="#8a93a0"/><path d="M669,85 l0,8 2,-2 1.5,3 1.2,-.6 -1.4,-2.8 2.7,0z" fill="#222"/>
<path d="M677,87 h4 l-2,2.5z" fill="#444"/>
<rect x="684.500" y="83.500" width="9" height="8" fill="none" stroke="#222" stroke-dasharray="2 1"/><path d="M689,86 l0,7 2,-1.600 1.300,2.500 1.200,-.6 -1.300,-2.500 2.500,0z" fill="#111"/>
<path d="M697,87 h4 l-2,2.500z" fill="#444"/>
<path d="M704,83 h8 v8 h-8z" fill="none" stroke="#555"/><path d="M703,82 l8,8 m0,-8 l-8,8" stroke="#d01818" stroke-width="1.200"/><path d="M710,88 l4,-3 1,1 -3,4z" fill="#b88820"/>
<path d="M717,87 h4 l-2,2.500z" fill="#444"/>
</svg></div>
<div class="vtb" style="left:743px;width:129px"><svg width="129" height="17" viewBox="743 79 129 17">
<circle cx="752" cy="86" r="3" fill="#fff" stroke="#333" stroke-width="1.200"/><rect x="750.500" y="89" width="3" height="3.500" fill="#333"/>
<circle cx="766" cy="86" r="3.300" fill="#ffd83a" stroke="#c9a010" stroke-width=".8"/><rect x="764.500" y="89.300" width="3" height="3.200" fill="#444"/>
<circle cx="777.500" cy="84.500" r="2.300" fill="#fff" stroke="#333"/><circle cx="783" cy="89.500" r="2.600" fill="#ffd83a" stroke="#c9a010" stroke-width=".7"/><path d="M781,83 q3,0 3,3 m-7,3 q0,3 3,3" fill="none" stroke="#2850c0" stroke-width="1"/>
<circle cx="797" cy="86" r="3" fill="#eef1f4" stroke="#b4bbc3"/><rect x="795.500" y="89" width="3" height="3.500" fill="#b4bbc3"/><path d="M790,84 l0,6 2,-1.500z" fill="#b4bbc3"/>
<path d="M808.500,83 v7 m-3.500,-3.500 h7" stroke="#c3c9d0" stroke-width="1.600"/>
<path d="M822.500,83 v7 m-3.500,-3.500 h7" stroke="#c3c9d0" stroke-width="1.600"/>
<line x1="829.500" y1="82" x2="829.500" y2="94" stroke="#c4cbd2"/>
<path d="M832.500,86.500 h8 v6 h-8z M832.500,86.500 l3,-3 h8 l-3,3 M843.500,83.500 v6 l-3,3 M832.500,89.500 h8 l3,-3" fill="none" stroke="#222" stroke-width="1"/>
<path d="M846,87 h4 l-2,2.500z" fill="#444"/>
<path d="M852.500,86.500 h7 v6 h-7z M852.500,86.500 l3,-3 h7 l-3,3 M862.500,83.500 v6 l-3,3" fill="#f0e2b0" stroke="#222" stroke-width="1"/><path d="M859,86 l0,7.500 2,-1.800 1.400,2.800 1.200,-.6 -1.400,-2.800 2.600,0z" fill="#111"/>
<path d="M866,87 h4 l-2,2.500z" fill="#444"/>
</svg></div>
<div class="vtb" style="left:892px;width:194px"><svg width="194" height="17" viewBox="892 79 194 17">
<path d="M896.500,88.500 h7 q2.500,0 2.500,-2.500 v-2" fill="none" stroke="#1a1a1a" stroke-width="2"/><path d="M895,88.500 l4.500,-3.500 v7z" fill="#1a1a1a"/>
<path d="M913,84 l3,3 -2,4 m3,-8 v9" stroke="#c5cbd2" fill="none"/>
<line x1="922.500" y1="82" x2="922.500" y2="94" stroke="#c4cbd2"/>
<path d="M925,84 h3 m-1.500,-1.500 v3" stroke="#2850c0" stroke-width="1.100"/><path d="M926,88 l3,1 2,4 4,-5" fill="none" stroke="#222" stroke-width="1.200"/>
<line x1="937.500" y1="82" x2="937.500" y2="94" stroke="#c4cbd2"/>
<g stroke="#bcc3cb" fill="none" stroke-width="1.100">
<path d="M941,84 v8 m3,-7 h5 v3 h-5z m0,5 h5"/>
<path d="M956,85 l4,-2 2,4 -4,2z m2,5 v3"/>
<path d="M970,92 v-6 l3,-3 v9 m2,-6 l2,2 v4"/>
<path d="M984,84 l3,2 -3,2 m3,-2 h3 m-4,4 l2,3"/>
<path d="M997,84 h9 m-9,3 h9 m-7,3 h5"/>
<path d="M1011,91 l3,-3 3,3"/>
<path d="M1026,83 v9 m3,-9 v9 m-6,0 l2,-3"/>
<path d="M1040,83 h4 v3 h-4z m3,5 l2,2 v3"/>
<path d="M1054,84 h7 v7 h-7z m2,2 h7 v6"/>
<path d="M1071,84 l3,3 -2,5 m3,-6 l2,-2"/>
</g>
<line x1="1035.500" y1="82" x2="1035.500" y2="94" stroke="#c4cbd2"/><line x1="1066.500" y1="82" x2="1066.500" y2="94" stroke="#c4cbd2"/>
<path d="M1080,85 v5 l3,-2.500z" fill="#333"/>
</svg></div>

<style>
.hc{position:absolute;top:611px;height:13px;border-right:1px solid #c8c8c8;border-bottom:1px solid #c8c8c8;background:#fafafa;font-size:8.500px;line-height:12px;padding-left:3px;color:#222;white-space:nowrap;letter-spacing:-.3px}
</style>
<div class="abs" style="left:305px;top:513px;width:847px;height:193px;background:#fff;border-left:1px solid #8a8a8a;border-bottom:1px solid #6a6a6a"></div>
<div class="ptitle" style="left:306px;top:513px;width:846px;height:15px;line-height:15px">输出面板</div>
<div class="abs" style="left:306px;top:578px;width:846px;height:18px;background:#eff1f3"></div>
<div class="abs" style="left:306px;top:578px;width:33px;height:16px;background:#fff;font-size:8px;line-height:15px;text-align:center;color:#222;letter-spacing:-.3px">信息</div>
<div class="abs" style="left:306px;top:596px;width:846px;height:1px;background:#8c959e"></div>
<div class="ptitle" style="left:306px;top:597px;width:846px;height:14px;line-height:14px">NC计算控制器</div>
<div class="abs" style="left:659px;top:611px;width:493px;height:13px;background:#f1f2f3"></div>
<div class="abs" style="left:800px;top:645px;width:352px;height:33px;background:radial-gradient(ellipse at 100% 100%,#f0f1f2 40%,rgba(240,241,242,0) 100%)"></div>
<div class="hc" style="left:306px;width:56px">刀轨文件夹</div>
<div class="hc" style="left:362px;width:41px">程序</div>
<div class="hc" style="left:403px;width:40px">注释</div>
<div class="hc" style="left:443px;width:56px">刀具</div>
<div class="hc" style="left:499px;width:40px">坐标系</div>
<div class="hc" style="left:539px;width:79px">状况</div>
<div class="hc" style="left:618px;width:41px">进度</div>
<div class="abs" style="left:306px;top:677px;width:846px;height:28px;background:linear-gradient(#f4f5f6,#eeeff1 40%)"></div>
<div class="abs" style="left:1147px;top:687px;font-size:8px;font-weight:bold;color:#333">▲</div>
<!-- status bar -->
<div class="sb" style="left:723px;width:138px"></div>
<div class="sb" style="left:861px;width:66px">单位</div>
<div class="sb" style="left:927px;width:49px">X</div>
<div class="sb" style="left:976px;width:50px">Y</div>
<div class="sb" style="left:1026px;width:46px">Z</div>
<div class="sb" style="left:1073px;width:23px;color:#aaa;padding-left:2px">CAP</div>
<div class="sb" style="left:1097px;width:25px;color:#222;padding-left:2px">NUM</div>
<div class="sb" style="left:1123px;width:25px;color:#aaa;padding-left:2px">SCRL</div>

<div class="abs" style="left:20px;top:120px;width:92px;height:165px;background:#f1f2f4;border:1px solid #b9bcc0;box-shadow:1px 1px 2px rgba(0,0,0,.35)"></div>
<div class="abs" style="left:22px;top:122px;width:14px;height:14px;background:#e6eaf2;border:1px solid #c4cad6"></div>
<svg class="abs" style="left:25px;top:125px" width="9" height="9" viewBox="0 0 9 9"><circle cx="4.500" cy="4.500" r="3.500" fill="#6a58b8"/><circle cx="3.500" cy="3.300" r="1.300" fill="#c8c0f0"/></svg>
<svg class="abs" style="left:30px;top:90px" width="80" height="90" viewBox="30 90 80 90">
<circle cx="69" cy="140" r="28" fill="#eeee10" fill-opacity=".88"/>
<defs><filter id="blr" x="-30%" y="-30%" width="160%" height="160%"><feGaussianBlur stdDeviation="0.9"/></filter></defs><circle cx="70.500" cy="105" r="7.300" fill="#e4f6f6" fill-opacity=".85" stroke="#f0a4a4" stroke-width="4.500" stroke-opacity=".75" filter="url(#blr)"/>
</svg>
<div class="mi" style="left:43px;top:124px;color:#6b6b50">体积铣</div>
<div class="mi" style="left:43px;top:138.500px">曲面铣</div>
<div class="mi" style="left:43px;top:153px">清角</div>
<div class="mi" style="left:43px;top:167.500px">局部铣</div>
<div class="mi" style="left:43px;top:182px">轮廓铣</div>
<div class="mi" style="left:43px;top:196.500px">2.5轴</div>
<div class="mi" style="left:43px;top:211px">钻孔</div>
<div class="mi" style="left:43px;top:225.500px">开槽</div>
<div class="mi" style="left:43px;top:240px">转换</div>
<div class="mi" style="left:43px;top:254.500px">五轴加工</div>
<div class="mi" style="left:43px;top:269px">测量</div>
<svg class="abs" style="left:66px;top:139px" width="12" height="16" viewBox="0 0 12 16"><path d="M2,1 v11 l2.500,-2.300 2,4.300 2,-.9 -2,-4.200 3.500,0z" fill="#fff" stroke="#111" stroke-width=".9"/></svg>

</body>
</html>
